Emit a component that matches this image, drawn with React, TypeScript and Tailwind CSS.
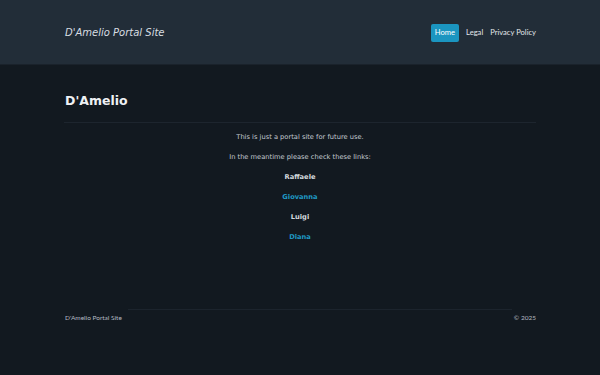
export default function App() {
  const links = [
    { name: "Raffaele", color: "text-[#d4d9de]" },
    { name: "Giovanna", color: "text-[#1f98c4]" },
    { name: "Luigi", color: "text-[#d4d9de]" },
    { name: "Diana", color: "text-[#1f98c4]" },
  ];

  return (
    <div className="min-h-[375px] w-[600px] bg-[#121920] font-['DejaVu_Sans',sans-serif] text-[#c2c9d0]">
      {/* Header */}
      <header className="h-[65px] bg-[#222d38] border-b border-[#1a222b] flex items-center">
        <div className="w-[472px] mx-auto flex items-center justify-between pt-[1px]">
          <span className="italic text-[10px] text-[#d8dde2] pl-[1px]">D'Amelio Portal Site</span>
          <nav className="flex items-center gap-[7px] font-['Lato',sans-serif] text-[7.6px] text-[#e3e7eb]">
            <span className="bg-[#1b95c0] text-white rounded-[2px] px-[4px] h-[18px] flex items-center">Home</span>
            <span>Legal</span>
            <span>Privacy Policy</span>
          </nav>
        </div>
      </header>

      {/* Main */}
      <main className="w-[472px] mx-auto">
        <h1 className="pt-[27px] pb-[11px] border-b border-[#1d252e] font-bold text-[12.5px] text-[#eef1f4] pl-[1px]">
          D'Amelio
        </h1>
        <div className="flex flex-col items-center text-[6.7px] pt-[9px]">
          <p className="h-[10px] leading-[10px]">This is just a portal site for future use.</p>
          <p className="h-[10px] leading-[10px] mt-[10px]">In the meantime please check these links:</p>
          {links.map((l) => (
            <p key={l.name} className={`h-[10px] leading-[10px] mt-[10px] font-bold ${l.color}`}>
              {l.name}
            </p>
          ))}
        </div>

        {/* Footer */}
        <footer className="mt-[67px] relative flex items-center justify-between pt-[4px] font-['Lato',sans-serif] text-[6.5px] text-[#b4bbc2]">
          <div className="absolute top-0 left-[64px] right-[24px] h-px bg-[#1c242d]" />
          <span className="pl-[1px]">D'Amelio Portal Site</span>
          <span>© 2025</span>
        </footer>
      </main>
    </div>
  );
}
